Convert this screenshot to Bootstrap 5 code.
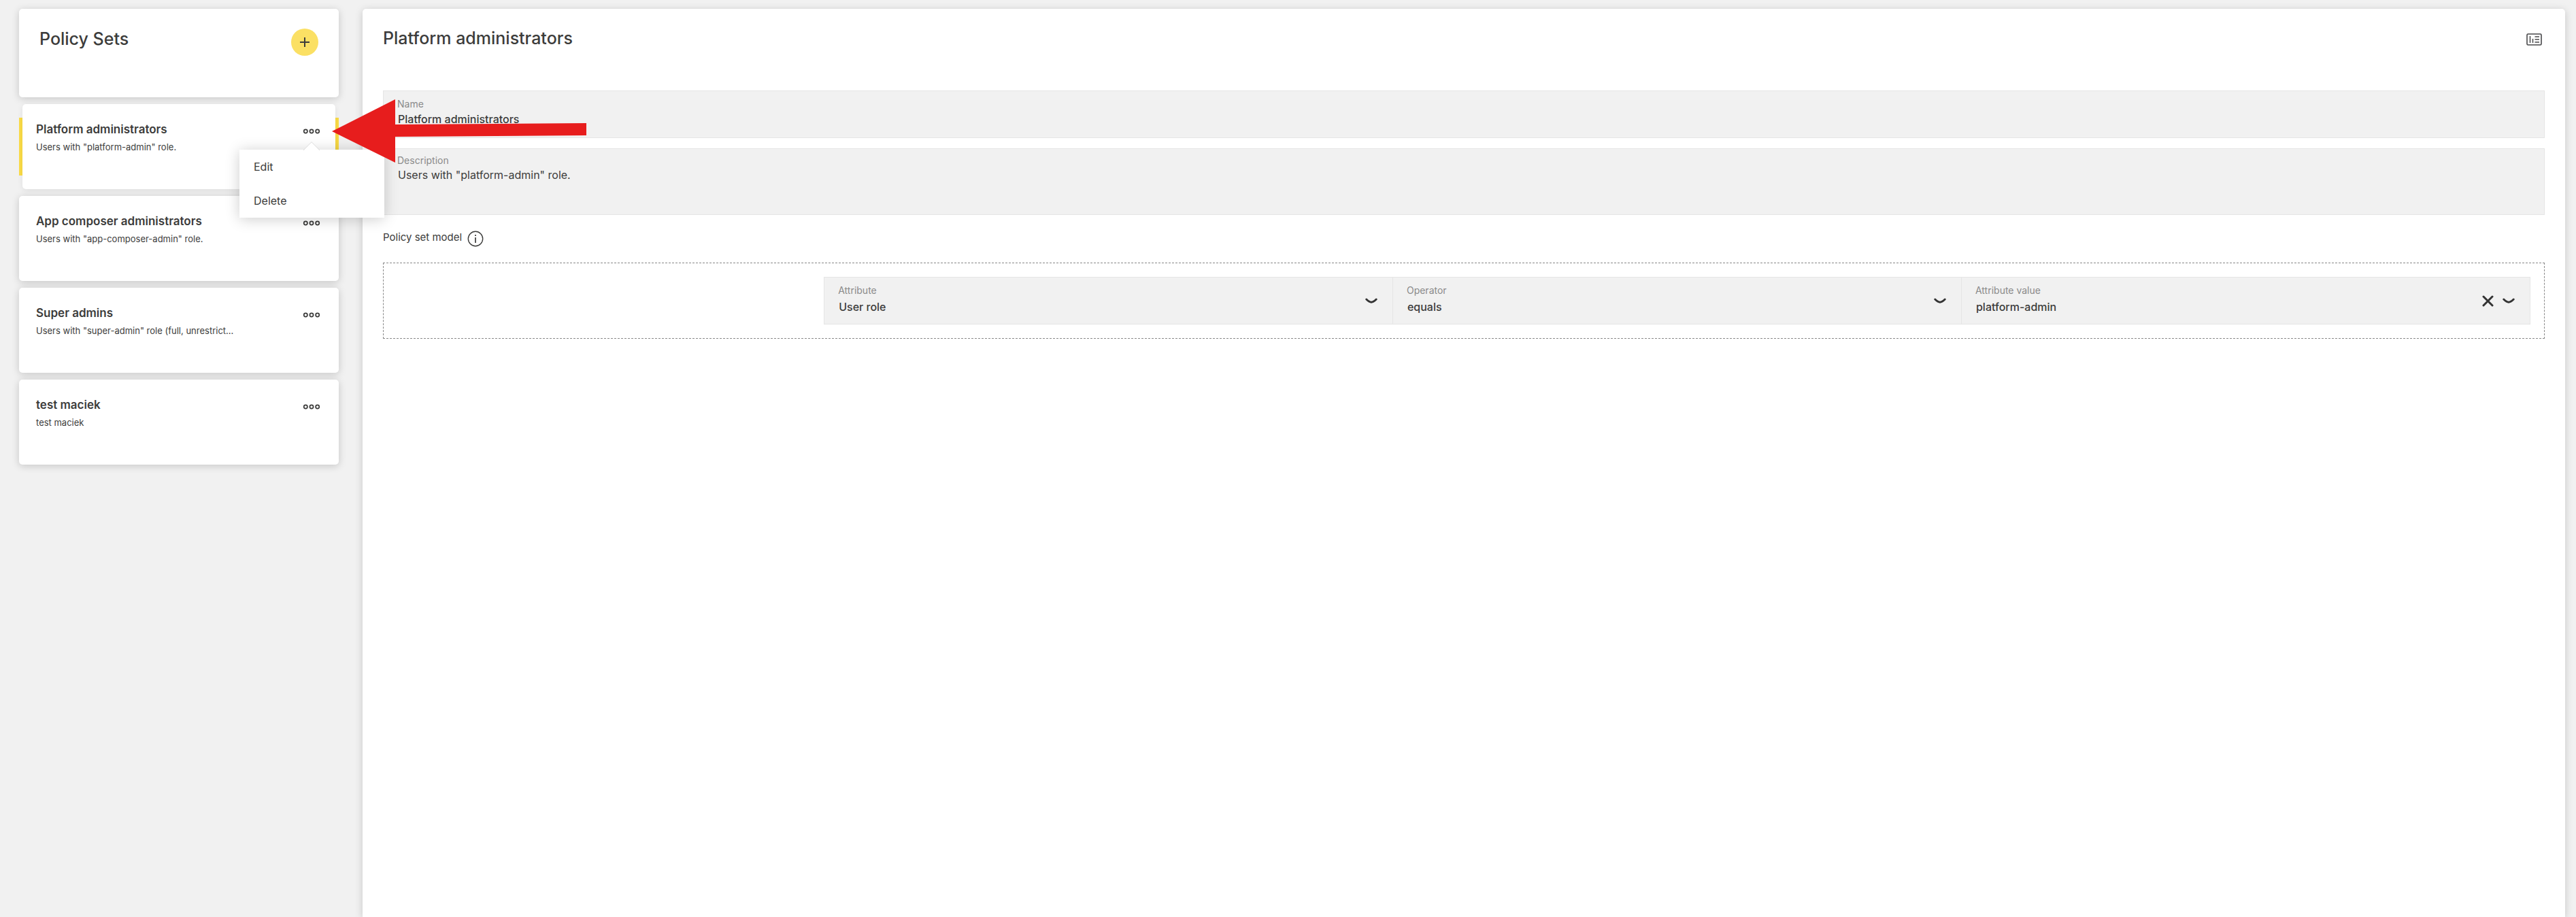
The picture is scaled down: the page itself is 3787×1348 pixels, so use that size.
<!doctype html>
<html lang="en">
<head>
<meta charset="utf-8">
<meta name="viewport" content="width=device-width, initial-scale=1">
<title>Policy Sets</title>
<link href="https://cdn.jsdelivr.net/npm/bootstrap@5.3.0/dist/css/bootstrap.min.css" rel="stylesheet">
<style>
  body { background: #f1f1f1; color: #3c3c3b; font-family: Inter, "Liberation Sans", sans-serif; font-size: 16px; }
  .shell { height: 100vh; padding: 13px 16px 0 28px; gap: 35px; }
  .side { width: 470px; gap: 10px; }
  .panel { background: #fff; border-radius: 5px; box-shadow: 0 2px 12px rgba(0, 0, 0, .18); }
  .side-head { height: 130px; padding: 29px 30px; }
  .title { font-size: 25px; line-height: 30px; font-weight: 500; }
  .add-btn { width: 40px; height: 40px; background: #fbe064; }
  .policy-list { gap: 10px; }
  .policy { min-height: 125px; padding: 25px; }
  .policy-title { font-size: 17px; line-height: 24px; font-weight: 600; margin-bottom: 4px; }
  .policy-text { font-size: 13px; line-height: 20px; }
  .selected { background: linear-gradient(#fbdc46, #fbdc46) center / 100% 85px no-repeat; padding: 0 5px; }
  .selected .policy { padding: 25px 20px; box-shadow: 0 2px 8px rgba(0, 0, 0, .08); }
  .more-btn { width: 30px; height: 30px; }
  .action-menu { top: 67px; left: 324px; width: 213px; z-index: 5; background: #fff; box-shadow: 0 2px 20px rgba(0, 0, 0, .2); }
  .action-menu a { display: block; height: 50px; padding: 0 21px; line-height: 50px; color: #3c3c3b; text-decoration: none; }
  .caret-up { top: -12px; left: 94px; }
  .main { border-radius: 5px 5px 0 0; padding: 28px 30px 0; }
  .main-head { margin-bottom: 62px; }
  .card-icon { margin: 8px 4px 0 0; }
  .field { background: #f1f1f1; border: 1px solid #e5e5e5; padding: 9px 22px 9px 20px; min-height: 70px; }
  .field label { font-size: 14px; line-height: 20px; color: #8a8a8a; }
  .field input, .field select, .field textarea { width: 100%; border: 0; padding: 0 1px; background: transparent; color: #3c3c3b; font-size: 16px; line-height: 24px; font-weight: 500; appearance: none; outline: 0; }
  .field textarea { font-weight: 400; resize: none; }
  .field-area { margin: 15px 0 23px; padding-top: 8px; height: 98px; }
  .field-area label { line-height: 18px; }
  .model-label { font-size: 15px; line-height: 20px; gap: 8px; margin-bottom: 23px; }
  .rules { border: 1px dashed #888; padding: 20px; }
  .rule { width: 80%; }
  .rule .field + .field { border-left: 0; }
  .rule .field { gap: 13px; }
  .rule label { margin-bottom: 2px; }
  .pointer { left: 488px; top: 145px; z-index: 10; pointer-events: none; }
</style>
<script src="https://cdn.jsdelivr.net/npm/bootstrap@5.3.0/dist/js/bootstrap.bundle.min.js"></script>
</head>
<body class="overflow-hidden">
<svg class="d-none" aria-hidden="true">
  <symbol id="dots" viewBox="0 0 26 10"><g fill="none" stroke="#3c3c3b" stroke-width="1.7"><circle cx="4.3" cy="5" r="2.6"/><circle cx="13" cy="5" r="2.6"/><circle cx="21.7" cy="5" r="2.6"/></g></symbol>
  <symbol id="chevron" viewBox="0 0 18 9"><path d="M1.8 2Q6 6.2 9 6.2T16.2 2" fill="none" stroke="#333" stroke-width="3" stroke-linecap="round"/></symbol>
</svg>

<div class="shell d-flex position-relative">
  <aside class="side d-flex flex-column flex-shrink-0">
    <header class="panel side-head d-flex justify-content-between align-items-start">
      <h1 class="title mb-0">Policy Sets</h1>
      <button type="button" class="add-btn btn border-0 rounded-circle p-0 d-flex align-items-center justify-content-center" aria-label="Add policy set">
        <svg width="14" height="14" viewBox="0 0 14 14"><path d="M7 0v14M0 7h14" stroke="#3c3c3b" stroke-width="2"/></svg>
      </button>
    </header>
    <ul class="policy-list list-unstyled d-flex flex-column mb-0">
      <li class="selected position-relative">
        <article class="policy panel d-flex justify-content-between align-items-start">
          <div><h2 class="policy-title">Platform administrators</h2><p class="policy-text mb-0">Users with "platform-admin" role.</p></div>
          <button type="button" class="more-btn btn border-0 p-0 d-flex align-items-center justify-content-center" aria-label="Actions" aria-expanded="true"><svg width="26" height="10"><use href="#dots"/></svg></button>
        </article>
        <nav class="action-menu position-absolute" aria-label="Policy set actions">
          <svg class="caret-up position-absolute" width="24" height="13" viewBox="0 0 24 13"><path d="M0 13L12 .7L24 13" fill="#fff" stroke="#ddd"/></svg>
          <a href="#edit">Edit</a>
          <a href="#delete">Delete</a>
        </nav>
      </li>
      <li>
        <article class="policy panel d-flex justify-content-between align-items-start">
          <div><h2 class="policy-title">App composer administrators</h2><p class="policy-text mb-0">Users with "app-composer-admin" role.</p></div>
          <button type="button" class="more-btn btn border-0 p-0 d-flex align-items-center justify-content-center" aria-label="Actions"><svg width="26" height="10"><use href="#dots"/></svg></button>
        </article>
      </li>
      <li>
        <article class="policy panel d-flex justify-content-between align-items-start">
          <div><h2 class="policy-title">Super admins</h2><p class="policy-text mb-0">Users with "super-admin" role (full, unrestrict...</p></div>
          <button type="button" class="more-btn btn border-0 p-0 d-flex align-items-center justify-content-center" aria-label="Actions"><svg width="26" height="10"><use href="#dots"/></svg></button>
        </article>
      </li>
      <li>
        <article class="policy panel d-flex justify-content-between align-items-start">
          <div><h2 class="policy-title">test maciek</h2><p class="policy-text mb-0">test maciek</p></div>
          <button type="button" class="more-btn btn border-0 p-0 d-flex align-items-center justify-content-center" aria-label="Actions"><svg width="26" height="10"><use href="#dots"/></svg></button>
        </article>
      </li>
    </ul>
  </aside>

  <main class="main panel flex-grow-1">
    <div class="main-head d-flex justify-content-between align-items-start">
      <h2 class="title mb-0">Platform administrators</h2>
      <button type="button" class="card-icon btn border-0 p-0 d-flex" aria-label="Details">
        <svg width="23" height="18" viewBox="0 0 23 18" fill="none" stroke="#48484a"><rect x="1" y="1" width="21" height="16" rx="1.5" stroke-width="1.6"/><path d="M5.5 4v10M9.5 8v6M12.5 5h6.5M12.5 9h6.5M12.5 13h6.5" stroke-width="1.5"/></svg>
      </button>
    </div>

    <div class="field d-flex flex-column">
      <label for="name">Name</label>
      <input id="name" type="text" value="Platform administrators">
    </div>
    <div class="field field-area d-flex flex-column">
      <label for="description">Description</label>
      <textarea id="description" rows="2">Users with "platform-admin" role.</textarea>
    </div>

    <div class="model-label d-flex align-items-start">
      <span>Policy set model</span>
      <svg width="24" height="24" viewBox="0 0 24 24" role="img" aria-label="Information"><circle cx="12" cy="12" r="10.7" fill="none" stroke="#3c3c3b" stroke-width="1.4"/><path d="M12 10v8M12 6v2" stroke="#3c3c3b" stroke-width="1.7"/></svg>
    </div>

    <section class="rules" aria-label="Policy set model">
      <div class="rule d-flex ms-auto">
        <div class="field d-flex align-items-center w-100">
          <div class="flex-grow-1 align-self-start"><label class="d-block" for="attribute">Attribute</label><select id="attribute"><option>User role</option></select></div>
          <svg width="18" height="9"><use href="#chevron"/></svg>
        </div>
        <div class="field d-flex align-items-center w-100">
          <div class="flex-grow-1 align-self-start"><label class="d-block" for="operator">Operator</label><select id="operator"><option>equals</option></select></div>
          <svg width="18" height="9"><use href="#chevron"/></svg>
        </div>
        <div class="field d-flex align-items-center w-100">
          <div class="flex-grow-1 align-self-start"><label class="d-block" for="value">Attribute value</label><select id="value"><option>platform-admin</option></select></div>
          <button type="button" class="btn border-0 p-0 d-flex" aria-label="Clear value"><svg width="17" height="17" viewBox="0 0 17 17"><path d="M2 2l13 13M15 2L2 15" stroke="#333" stroke-width="3" stroke-linecap="round"/></svg></button>
          <svg width="18" height="9"><use href="#chevron"/></svg>
        </div>
      </div>
    </section>
  </main>

  <svg class="pointer position-absolute" width="375" height="96" viewBox="0 0 375 96" aria-hidden="true"><path d="M0 48L93 1V38L374 36V54L93 56V94Z" fill="#e71d1d"/></svg>
</div>
</body>
</html>
